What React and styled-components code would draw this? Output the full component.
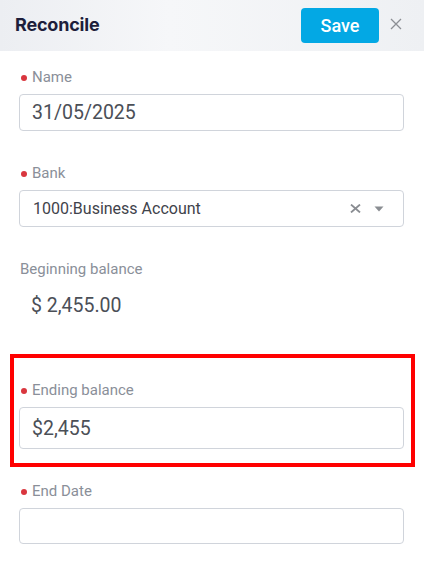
import styled, { createGlobalStyle } from 'styled-components'

const GlobalStyle = createGlobalStyle`
  html, body {
    margin: 0;
    padding: 0;
    background: #fff;
  }
  body {
    font-family: Roboto, "Noto Sans", Arial, sans-serif;
  }
  * {
    box-sizing: border-box;
  }
`

export default function App() {
  return (
    <Panel>
      <GlobalStyle />
      <Header>
        <Title>Reconcile</Title>
        <HeaderActions>
          <SaveButton>Save</SaveButton>
          <CloseButton aria-label="Close">
            <svg width="12" height="12" viewBox="0 0 12 12">
              <path d="M1 1L11 11M11 1L1 11" stroke="#8c8f94" strokeWidth="1.3" />
            </svg>
          </CloseButton>
        </HeaderActions>
      </Header>

      <Form>
        <Field>
          <Label $required>Name</Label>
          <TextBox>31/05/2025</TextBox>
        </Field>

        <Field>
          <Label $required>Bank</Label>
          <SelectBox>
            <SelectValue>1000:Business Account</SelectValue>
            <SelectIcons>
              <svg width="11" height="9" viewBox="0 0 11 9">
                <path d="M1 0.6L10 8.4M10 0.6L1 8.4" stroke="#8a8d92" strokeWidth="1.9" />
              </svg>
              <svg width="10" height="6" viewBox="0 0 10 6">
                <path d="M0.5 0.5H9.5L5 5.5Z" fill="#8a8d92" />
              </svg>
            </SelectIcons>
          </SelectBox>
        </Field>

        <Field $gap={56}>
          <Label>Beginning balance</Label>
          <StaticValue>$ 2,455.00</StaticValue>
        </Field>

        <Field $highlight>
          <Label $required>Ending balance</Label>
          <TextBox $height={42}>$2,455</TextBox>
        </Field>

        <Field>
          <Label $required>End Date</Label>
          <TextBox $height={36} />
        </Field>
      </Form>
    </Panel>
  )
}

const Panel = styled.div`
  width: 100%;
  min-height: 100vh;
  background: #fff;
`

const Header = styled.div`
  height: 51px;
  display: flex;
  align-items: center;
  justify-content: space-between;
  padding: 0 22px 0 15px;
  background: linear-gradient(90deg, #eceef2 0%, #f6f7f9 40%, #eef0f3 100%);
`

const Title = styled.h1`
  margin: 0 0 3px;
  font-family: Inter, Roboto, sans-serif;
  font-size: 18px;
  font-weight: 700;
  color: #1d1e3b;
  letter-spacing: -0.2px;
`

const HeaderActions = styled.div`
  display: flex;
  align-items: center;
  gap: 11px;
  margin-top: -1px;
`

const SaveButton = styled.button`
  width: 78px;
  height: 35px;
  border: none;
  border-radius: 4px;
  background: #03a8e4;
  color: #fff;
  font-family: Roboto, sans-serif;
  font-size: 18px;
  font-weight: 500;
  cursor: pointer;
`

const CloseButton = styled.button`
  width: 12px;
  height: 12px;
  padding: 0;
  border: none;
  background: none;
  display: flex;
  margin-bottom: 2px;
`

const Form = styled.div`
  padding: 16px 20px 0 19px;
`

const Field = styled.div`
  position: relative;
  display: flex;
  flex-direction: column;
  margin-bottom: ${(p) => p.$gap ?? 32}px;

  ${(p) =>
    p.$highlight &&
    `
    &::after {
      content: '';
      position: absolute;
      top: -26px;
      left: -9px;
      right: -11px;
      bottom: -18px;
      border: 4px solid #ff0000;
      pointer-events: none;
    }
  `}
`

const Label = styled.div`
  display: flex;
  align-items: center;
  gap: 5px;
  height: 20px;
  padding-left: ${(p) => (p.$required ? 2 : 1)}px;
  margin-bottom: 7px;
  font-size: 15px;
  color: #8a8f99;

  &::before {
    content: '';
    display: ${(p) => (p.$required ? 'block' : 'none')};
    width: 6px;
    height: 6px;
    border-radius: 50%;
    background: #d9363e;
    margin-top: 1px;
  }
`

const TextBox = styled.div`
  height: ${(p) => p.$height ?? 37}px;
  display: flex;
  align-items: center;
  padding: 0 12px;
  border: 1px solid #d0d4db;
  border-radius: 4px;
  font-size: 19.5px;
  color: #4b4f57;
`

const SelectBox = styled.div`
  height: 37px;
  display: flex;
  align-items: center;
  justify-content: space-between;
  padding: 0 19px 0 13px;
  border: 1px solid #d0d4db;
  border-radius: 4px;
`

const SelectValue = styled.span`
  font-size: 16px;
  color: #3f434b;
`

const SelectIcons = styled.div`
  display: flex;
  align-items: center;
  gap: 13px;
`

const StaticValue = styled.div`
  height: 38px;
  display: flex;
  align-items: center;
  padding-left: 12px;
  font-size: 19.5px;
  color: #4b4f57;
`
